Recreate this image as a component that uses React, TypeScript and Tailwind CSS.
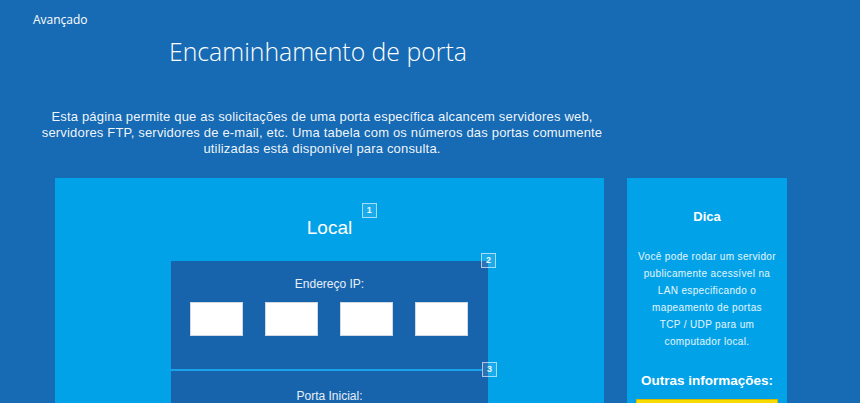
import React from 'react'

function Badge({ n, className }: { n: string; className: string }) {
  return (
    <span
      className={`absolute flex h-[15px] w-[15px] items-center justify-center border border-white/60 bg-white/10 text-[9px] font-bold leading-none text-white/90 ${className}`}
    >
      {n}
    </span>
  )
}

export default function App() {
  return (
    <div className="h-[403px] w-[860px] overflow-hidden bg-[#176bb4] text-white [font-family:'Liberation_Sans',Arial,sans-serif]">
      <div className="pl-[33px] pt-[12px] text-[12px] leading-[16px] [font-family:'Open_Sans',sans-serif]">
        Avançado
      </div>

      <h1 className="ml-[169px] mt-[7px] text-[24.8px] font-light leading-[32px] [font-family:'Open_Sans',sans-serif]">
        Encaminhamento de porta
      </h1>

      <p className="ml-[22px] mt-[42px] w-[600px] whitespace-nowrap text-center text-[13px] leading-[16px] tracking-[0.18px] text-white/95">
        Esta página permite que as solicitações de uma porta específica alcancem servidores web,
        <br />
        servidores FTP, servidores de e-mail, etc. Uma tabela com os números das portas comumente
        <br />
        utilizadas está disponível para consulta.
      </p>

      <div className="ml-[55px] mt-[21px] flex gap-[23px]">
        {/* main panel */}
        <div className="h-[260px] w-[549px] bg-[#02a2e8] pt-[38px]">
          <div className="flex justify-center">
            <div className="relative text-[19px] leading-[24px]">
              Local
              <Badge n="1" className="left-[55px] top-[-13px]" />
            </div>
          </div>

          <div className="relative mx-auto mt-[21px] w-[317px] bg-[#1764ad]">
            <Badge n="2" className="right-[-8px] top-[-8px]" />
            <div className="pt-[15px] text-center text-[12px] leading-[16px] text-white/90">Endereço IP:</div>
            <div className="mt-[10px] flex gap-[22px] pl-[19px]">
              <div className="h-[34px] w-[53px] border border-[#cfd8e3] bg-white" />
              <div className="h-[34px] w-[53px] border border-[#cfd8e3] bg-white" />
              <div className="h-[34px] w-[53px] border border-[#cfd8e3] bg-white" />
              <div className="h-[34px] w-[53px] border border-[#cfd8e3] bg-white" />
            </div>
            <div className="relative mt-[33px] h-[2px] w-[311px] bg-[#1aa3ea]">
              <Badge n="3" className="left-[311px] top-[-7px]" />
            </div>
            <div className="pt-[17px] pb-[20px] text-center text-[12px] leading-[16px] text-white/90">Porta Inicial:</div>
          </div>
        </div>

        {/* side panel */}
        <div className="h-[260px] w-[160px] bg-[#02a2e8] pt-[30px] text-center">
          <div className="text-[13px] font-bold leading-[18px]">Dica</div>
          <p className="mt-[22px] text-[10px] leading-[17px] tracking-[0.35px] text-white/90">
            Você pode rodar um servidor
            <br />
            publicamente acessível na
            <br />
            LAN especificando o
            <br />
            mapeamento de portas
            <br />
            TCP / UDP para um
            <br />
            computador local.
          </p>
          <div className="mt-[22px] text-[13.5px] font-bold leading-[18px]">Outras informações:</div>
          <div className="mx-[9px] mt-[9px] h-[20px] border border-[#d7b800] bg-[#f6da00]" />
        </div>
      </div>
    </div>
  )
}
